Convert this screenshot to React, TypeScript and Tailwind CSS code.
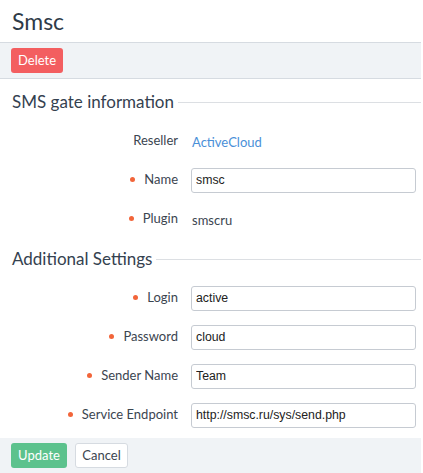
const SANS = "font-['Lato','Open_Sans',sans-serif]";
const ARIAL = "font-['Liberation_Sans',Arial,sans-serif]";

type Row = { label: string; required?: boolean; value: string; kind: "text" | "link" | "input" };

const GATE: Row[] = [
  { label: "Reseller", value: "ActiveCloud", kind: "link" },
  { label: "Name", required: true, value: "smsc", kind: "input" },
  { label: "Plugin", required: true, value: "smscru", kind: "text" },
];

const SETTINGS: Row[] = [
  { label: "Login", required: true, value: "active", kind: "input" },
  { label: "Password", required: true, value: "cloud", kind: "input" },
  { label: "Sender Name", required: true, value: "Team", kind: "input" },
  { label: "Service Endpoint", required: true, value: "http://smsc.ru/sys/send.php", kind: "input" },
];

function Heading({ title }: { title: string }) {
  return (
    <div className="h-[40px] flex items-center pl-3">
      <span className="text-[17px] text-[#34414f] leading-none">{title}</span>
      <span className="flex-1 h-px bg-[#dcdfe3] ml-1 mt-[2px]" />
    </div>
  );
}

function FieldRow({ row }: { row: Row }) {
  return (
    <div className="h-[39px] flex items-center">
      <div className="w-[178px] flex items-center justify-end gap-[9px] text-[13px] text-[#3b4550]">
        {row.required && <span className="w-[5px] h-[5px] rounded-full bg-[#f2653a]" />}
        <span>{row.label}</span>
      </div>
      <div className="ml-[13px] w-[225px]">
        {row.kind === "input" ? (
          <input
            readOnly
            value={row.value}
            className={`w-[225px] h-[25px] border border-[#c6cbd2] rounded-[3px] pl-[4px] text-[12.3px] text-[#222] outline-none ${ARIAL}`}
          />
        ) : row.kind === "link" ? (
          <span className="text-[13px] text-[#4a8fd8] ml-px">{row.value}</span>
        ) : (
          <span className="text-[13px] text-[#3b4550] ml-px">{row.value}</span>
        )}
      </div>
    </div>
  );
}

export default function App() {
  return (
    <div className={`w-[421px] h-[473px] bg-white ${SANS}`}>
      <div className="h-[42px] flex items-center pl-3">
        <h1 className="text-[23px] text-[#2f3b48] leading-none">Smsc</h1>
      </div>

      <div className="h-[37px] bg-[#f0f3f6] border-y border-[#d6dbe1] flex items-center pl-[11px]">
        <button className="h-[25px] w-[52px] rounded-[3px] bg-[#f35e60] text-white text-[13px]">Delete</button>
      </div>

      <div className="pt-[2px]">
        <Heading title="SMS gate information" />
      </div>
      {GATE.map((r) => (
        <FieldRow key={r.label} row={r} />
      ))}

      <Heading title="Additional Settings" />
      {SETTINGS.map((r) => (
        <FieldRow key={r.label} row={r} />
      ))}

      <div className="mt-[4px] h-[35px] bg-[#f0f3f6] flex items-center gap-2 pl-[11px]">
        <button className="h-[25px] w-[56px] rounded-[3px] bg-[#5cc28d] text-white text-[13px]">Update</button>
        <button className="h-[25px] w-[53px] rounded-[3px] bg-white border border-[#d6dbe1] text-[#3b4550] text-[13px]">Cancel</button>
      </div>
    </div>
  );
}
